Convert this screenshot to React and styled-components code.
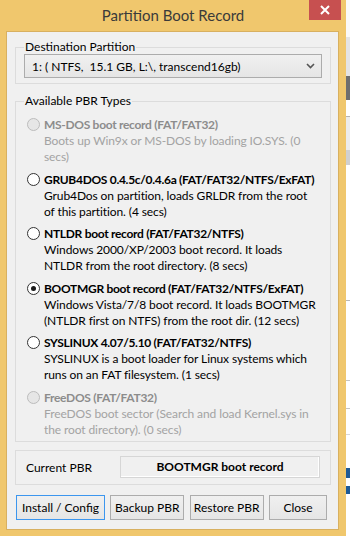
import styled, { createGlobalStyle } from "styled-components";

const Global = createGlobalStyle`
  html, body {
    margin: 0;
    padding: 0;
  }
  body {
    width: 350px;
    height: 536px;
    overflow: hidden;
    background: #fff;
    font-family: Lato, "Noto Sans", sans-serif;
    font-size: 12px;
    color: #000;
  }
`;

const Screen = styled.div`
  display: flex;
  width: 350px;
  height: 536px;
`;

const Window = styled.div`
  width: 346px;
  display: flex;
  flex-direction: column;
  background: #f0c76d;
  padding-bottom: 6px;
  box-sizing: border-box;
`;

// a sliver of the window lying behind the dialog
const Behind = styled.div`
  flex: 1;
  background: linear-gradient(
    to bottom,
    #fafafa 0 37px,
    #e4e4e4 37px 76px,
    #6e6e6e 76px 100px,
    #fff 100px 116px,
    #b4b4b4 116px 117px,
    #ececec 117px 150px,
    #d0d0d0 150px 165px,
    #fff 165px 300px,
    #b8b8b8 300px 301px,
    #fff 301px 380px,
    #c4c4c4 380px 381px,
    #fff 381px 408px,
    #c4c4c4 408px 409px,
    #fff 409px 434px,
    #d8d8d8 434px 435px,
    #fff 435px 468px,
    #1e5a96 468px 478px,
    #fff 478px 486px,
    #1e5a96 486px 494px,
    #fff 494px
  );
`;

const TitleBar = styled.div`
  height: 31px;
  display: grid;
  grid-template-columns: 1fr auto 1fr;
  align-items: start;
`;

const Title = styled.div`
  grid-column: 2;
  line-height: 30px;
  font-size: 15px;
  color: #3a3a3a;
`;

const CloseBtn = styled.div`
  grid-column: 3;
  justify-self: end;
  width: 32px;
  height: 20px;
  margin-right: 5px;
  background: #c75050;
  display: flex;
  align-items: center;
  justify-content: center;
`;

const Client = styled.div`
  flex: 1;
  margin: 0 7px 0 6px;
  background: #f0f0f0;
  border: 1px solid #d8b060;
  padding: 8px 7px 0 8px;
  display: flex;
  flex-direction: column;
  white-space: nowrap;
`;

const Group = styled.fieldset`
  margin: ${(p) => p.$top || 0}px 0 0 0;
  padding: ${(p) => p.$pad};
  border: 1px solid #dcdcdc;
  min-width: 0;
`;

const Legend = styled.legend`
  margin-left: 0;
  padding: 0 1px;
  line-height: 14px;
  font-size: 12px;
  color: #000;
`;

const Combo = styled.div`
  height: 24px;
  box-sizing: border-box;
  border: 1px solid #acacac;
  background: linear-gradient(#f0f0f0, #e5e5e5);
  display: flex;
  align-items: center;
  justify-content: space-between;
  padding: 0 6px 0 7px;
  white-space: pre;
`;

const Item = styled.div`
  display: grid;
  grid-template-columns: 17px 1fr;
  padding-left: 3px;
  margin-top: ${(p) => (p.$first ? 0 : 5.5)}px;
  color: ${(p) => (p.$disabled ? "#a3a3a3" : "#000")};
`;

const Radio = styled.span`
  width: 13px;
  height: 13px;
  box-sizing: border-box;
  border-radius: 50%;
  align-self: center;
  border: 1px solid ${(p) => (p.$disabled ? "#bcbcbc" : "#333")};
  background: ${(p) => (p.$disabled ? "#e6e6e6" : "#fff")};
  display: flex;
  align-items: center;
  justify-content: center;
  &::after {
    content: "";
    width: 5px;
    height: 5px;
    border-radius: 50%;
    background: ${(p) => (p.$checked ? "#1a1a1a" : "transparent")};
  }
`;

const ItemTitle = styled.div`
  font-weight: bold;
  line-height: 17px;
  letter-spacing: -0.3px;
  color: ${(p) => (p.$disabled ? "#8c8c8c" : "#000")};
`;

const Desc = styled.div`
  grid-column: 2;
  line-height: 16px;
  letter-spacing: -0.1px;
`;

const CurrentRow = styled.div`
  display: flex;
  align-items: center;
`;

const CurrentLabel = styled.div`
  width: 94px;
  line-height: 16px;
  margin-top: 2px;
`;

const CurrentBox = styled.div`
  width: 200px;
  height: 22px;
  box-sizing: border-box;
  border: 1px solid #d6d6d6;
  box-shadow: inset -1px -1px 0 #fff;
  display: flex;
  align-items: center;
  justify-content: center;
  font-weight: bold;
`;

const ButtonRow = styled.div`
  margin-top: 10px;
  padding: 0 4px 0 1px;
  display: flex;
  justify-content: space-between;
`;

const Button = styled.div`
  width: ${(p) => p.$w}px;
  height: 25px;
  box-sizing: border-box;
  border: 1px solid ${(p) => (p.$default ? "#3c96ee" : "#acacac")};
  background: linear-gradient(#f0f0f0, #e5e5e5);
  display: flex;
  align-items: center;
  justify-content: center;
`;

const types = [
  {
    title: "MS-DOS boot record (FAT/FAT32)",
    desc: ["Boots up Win9x or MS-DOS by loading IO.SYS. (0", "secs)"],
    disabled: true,
  },
  {
    title: "GRUB4DOS 0.4.5c/0.4.6a (FAT/FAT32/NTFS/ExFAT)",
    desc: ["Grub4Dos on partition, loads GRLDR from the root", "of this partition. (4 secs)"],
  },
  {
    title: "NTLDR boot record (FAT/FAT32/NTFS)",
    desc: ["Windows 2000/XP/2003 boot record. It loads", "NTLDR from the root directory. (8 secs)"],
  },
  {
    title: "BOOTMGR boot record (FAT/FAT32/NTFS/ExFAT)",
    desc: ["Windows Vista/7/8 boot record. It loads BOOTMGR", "(NTLDR first on NTFS) from the root dir. (12 secs)"],
    checked: true,
  },
  {
    title: "SYSLINUX 4.07/5.10 (FAT/FAT32/NTFS)",
    desc: ["SYSLINUX is a boot loader for Linux systems which", "runs on an FAT filesystem. (1 secs)"],
  },
  {
    title: "FreeDOS (FAT/FAT32)",
    desc: ["FreeDOS boot sector (Search and load Kernel.sys in", "the root directory). (0 secs)"],
    disabled: true,
  },
];

export default function App() {
  return (
    <Screen>
      <Global />
      <Window>
        <TitleBar>
          <Title>Partition Boot Record</Title>
          <CloseBtn>
            <svg width="10" height="10" viewBox="0 0 10 10">
              <path d="M1 1L9 9M9 1L1 9" stroke="#fff" strokeWidth="2" />
            </svg>
          </CloseBtn>
        </TitleBar>
        <Client>
          <Group $pad="0 8px 5px 8px">
            <Legend>Destination Partition</Legend>
            <Combo>
              <span>1: ( NTFS,  15.1 GB, L:\, transcend16gb)</span>
              <svg width="9" height="6" viewBox="0 0 9 6">
                <path d="M1 1L4.5 4.5L8 1" fill="none" stroke="#555" strokeWidth="1.6" />
              </svg>
            </Combo>
          </Group>
          <Group $top={10} $pad="8px 6px 3px 8px">
            <Legend>Available PBR Types</Legend>
            {types.map((t, i) => (
              <Item key={t.title} $first={i === 0} $disabled={t.disabled}>
                <Radio $disabled={t.disabled} $checked={t.checked} />
                <ItemTitle $disabled={t.disabled}>{t.title}</ItemTitle>
                <Desc>
                  {t.desc[0]}
                  <br />
                  {t.desc[1]}
                </Desc>
              </Item>
            ))}
          </Group>
          <Group $top={8} $pad="5px 9px 6px 10px">
            <CurrentRow>
              <CurrentLabel>Current PBR</CurrentLabel>
              <CurrentBox>BOOTMGR boot record</CurrentBox>
            </CurrentRow>
          </Group>
          <ButtonRow>
            <Button $w={89} $default>Install / Config</Button>
            <Button $w={74}>Backup PBR</Button>
            <Button $w={74}>Restore PBR</Button>
            <Button $w={58}>Close</Button>
          </ButtonRow>
        </Client>
      </Window>
      <Behind />
    </Screen>
  );
}
